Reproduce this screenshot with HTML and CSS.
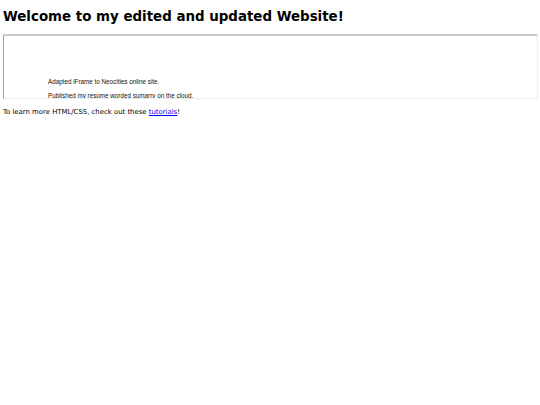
FILE: index.html
```html
<!DOCTYPE html>
<html lang="en">
<head>
<meta charset="utf-8">
<title>Welcome</title>
<link rel="stylesheet" href="styles.css">
</head>
<body>
<h1 class="title">Welcome to my edited and updated Website!</h1>
<div class="frame">
  <div class="frame-inner">
    <p class="frame-line">Adapted iFrame to Neocities online site.</p>
    <p class="frame-line">Published my resume worded sumarry on the cloud.</p>
  </div>
</div>
<p class="note">To learn more HTML/CSS, check out these <a class="link" href="#">tutorials</a>!</p>
</body>
</html>
```

FILE: styles.css
```css
html, body {
  background: #ffffff;
}
body {
  margin: 0;
  padding: 0 3px;
  font-family: "DejaVu Sans", Verdana, sans-serif;
  color: #000;
}
.title {
  font-family: "DejaVu Sans", Verdana, sans-serif;
  font-weight: bold;
  font-size: 13.4px;
  line-height: 20px;
  margin: 7px 0 0 0;
}
.frame {
  margin-top: 7px;
  height: 62px;
  width: 533px;
  border-top: 2px solid #cccccc;
  border-left: 1px solid #a0a0a0;
  border-right: 1px solid #eeeeee;
  border-bottom: 1px solid #eeeeee;
  overflow: hidden;
  background: #fff;
}
.frame-inner {
  padding: 42px 0 0 44px;
  font-family: "Liberation Sans", Arial, sans-serif;
  font-size: 6.3px;
  color: #111;
}
.frame-line {
  margin: 0 0 6px 0;
  line-height: 8px;
}
.note {
  font-size: 6.9px;
  line-height: 10px;
  margin: 8px 0 0 0;
}
.link {
  color: #0000ee;
  text-decoration: underline;
}
```
